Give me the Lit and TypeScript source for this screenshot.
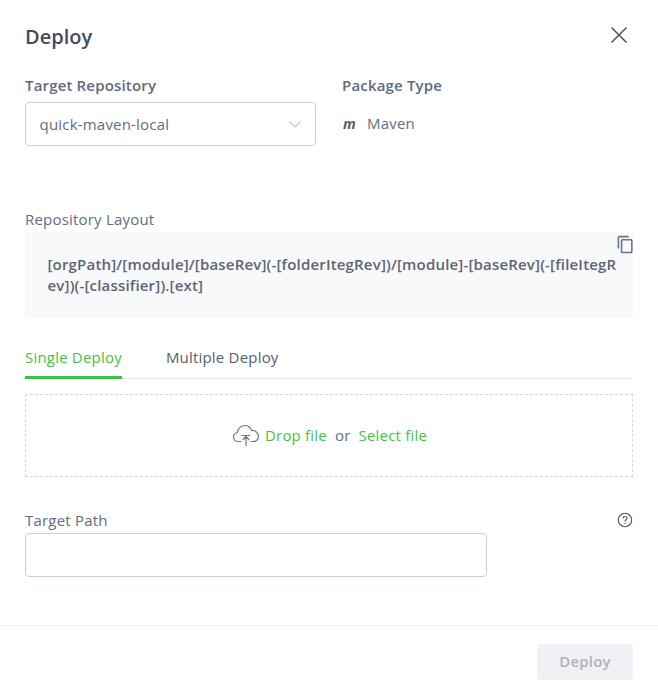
import { LitElement, html, css } from "lit";
import { customElement } from "lit/decorators.js";

@customElement("app-root")
export class AppRoot extends LitElement {
  static styles = css`
    :host { display: block; width: 658px; height: 696px; background: #fff; font-family: "Open Sans", sans-serif; color: #636d81; overflow: hidden; letter-spacing: .2px; }
    * { box-sizing: border-box; }
    .head { height: 74px; padding: 0 25px; display: flex; justify-content: space-between; align-items: center; }
    h1 { margin: -2px 0 0; font-size: 20px; line-height: 27px; font-weight: 600; color: #434c5e; letter-spacing: 0; }
    .close { width: 24px; height: 24px; margin-right: 2px; margin-top: -4px; display: block; }
    .row { display: flex; padding: 0 25px; gap: 26px; height: 106px; }
    .col1 { width: 291px; }
    .lab { font-size: 15px; font-weight: 600; line-height: 20px; color: #5f6a7e; margin: 1px 0 7px; letter-spacing: .17px; }
    .select { height: 44px; border: 1px solid #c9d0e3; border-radius: 4px; padding: 0 14px 0 13.5px; display: flex; align-items: center; justify-content: space-between; font-size: 15px; color: #636d81; }
    .select svg { margin-right: -1px; }
    .type { height: 44px; display: flex; align-items: center; font-size: 15px; margin-top: -1px; gap: 10px; }
    .m { width: 14px; font-weight: 700; font-style: italic; font-size: 14px; color: #535c70; margin-left: 1px; }
    .sec { padding: 0 25px; }
    .plain { font-size: 15px; line-height: 19px; margin-bottom: 3px; margin-top: 30px; color: #636d81; }
    .layout { position: relative; height: 86px; background: #f8f9fb; padding: 22px 16px 0 22.5px; font-size: 15px; letter-spacing: .18px; line-height: 21px; font-weight: 600; color: #5f6473; word-break: break-all; }
    .copy { position: absolute; right: -1.5px; top: 2.5px; width: 19px; height: 19px; display: block; }
    .tabs { margin: 27px 25px 0; height: 34px; border-bottom: 1px solid #e5e6ef; display: flex; gap: 44px; font-size: 15px; color: #555d6f; }
    .tab { line-height: 24px; height: 34px; }
    .tab.on { color: #45bf4b; border-bottom: 3px solid #40be46; }
    .drop { margin: 15px 25px 0; height: 83px; border: 1px dashed #d5d8df; display: flex; align-items: center; justify-content: center; font-size: 15px; color: #636d81; padding: 0 0 2px 1px; }
    .link { color: #45bf4b; }
    .or { margin: 0 8px; }
    .cloud { width: 28px; height: 24px; margin-right: 5px; display: block; }
    .tp { display: flex; justify-content: space-between; align-items: center; margin: 33px 25px 2px; height: 21px; font-size: 15px; }
    .tp span { margin-top: -2px; }
    .help { width: 16px; height: 16px; display: block; margin-top: -1px; }
    .input { display: block; margin-left: 25px; width: 462px; height: 44px; border: 1px solid #c9d0e3; border-radius: 4px; }
    .foot { margin-top: 48px; height: 71px; border-top: 1px solid #ececf0; padding: 18px 25px 0; display: flex; justify-content: flex-end; }
    .btn { width: 96px; height: 36px; border-radius: 4px; background: #f0f1f6; color: #b0b3bc; font-size: 15px; font-weight: 600; display: flex; align-items: center; justify-content: center; padding-bottom: 2px; }
  `;

  render() {
    return html`
      <div class="head">
        <h1>Deploy</h1>
        <svg class="close" viewBox="0 0 24 24" fill="none" stroke="#4a5160" stroke-width="1.5"><path d="M4.5 4.5 19.5 19.5M19.5 4.5 4.5 19.5"/></svg>
      </div>
      <div class="row">
        <div class="col1">
          <div class="lab">Target Repository</div>
          <div class="select">
            <span>quick-maven-local</span>
            <svg width="14" height="14" viewBox="0 0 14 14" fill="none" stroke="#c3c8d2" stroke-width="1.2"><path d="M1.5 4.5 7 10l5.5-5.5"/></svg>
          </div>
        </div>
        <div>
          <div class="lab">Package Type</div>
          <div class="type"><span class="m">m</span><span>Maven</span></div>
        </div>
      </div>
      <div class="sec">
        <div class="plain">Repository Layout</div>
        <div class="layout">
          [orgPath]/[module]/[baseRev](-[folderItegRev])/[module]-[baseRev](-[fileItegRev])(-[classifier]).[ext]
          <svg class="copy" viewBox="0 0 24 24" fill="#6a7488"><path d="M16 1H4c-1.1 0-2 .9-2 2v14h2V3h12V1zm3 4H8c-1.1 0-2 .9-2 2v14c0 1.1.9 2 2 2h11c1.1 0 2-.9 2-2V7c0-1.1-.9-2-2-2zm0 16H8V7h11v14z"/></svg>
        </div>
      </div>
      <div class="tabs">
        <div class="tab on">Single Deploy</div>
        <div class="tab">Multiple Deploy</div>
      </div>
      <div class="drop">
        <svg class="cloud" viewBox="0 0 28 24" fill="none" stroke="#6f788a" stroke-width="1.2" stroke-linecap="round" stroke-linejoin="round">
          <path d="M9 18.500H6.500C3.500 18.500 1.500 16.500 1.500 14c0-2.300 1.700-4 4-4.500C5.500 6 9 2.500 13 2.500c3 0 5.400 1.700 6.500 5 3.600-.3 7 2.300 7 6 0 2.700-2.300 5-5 5H19"/>
          <path d="M14 22.500V14M11 16.500 14 13.500l3 3M10 12.500h8"/>
        </svg>
        <span class="link">Drop file</span><span class="or">or</span><span class="link">Select file</span>
      </div>
      <div class="tp">
        <span>Target Path</span>
        <svg class="help" viewBox="0 0 16 16" fill="none" stroke="#4f5768" stroke-width="1.1"><circle cx="8" cy="8" r="6.700"/><path d="M6 6.400C6 5.200 6.900 4.500 8 4.500s2 .7 2 1.800c0 1.500-2 1.500-2 3.200"/><path d="M8 10.800v1.200"/></svg>
      </div>
      <div class="input"></div>
      <div class="foot"><div class="btn">Deploy</div></div>
    `;
  }
}
